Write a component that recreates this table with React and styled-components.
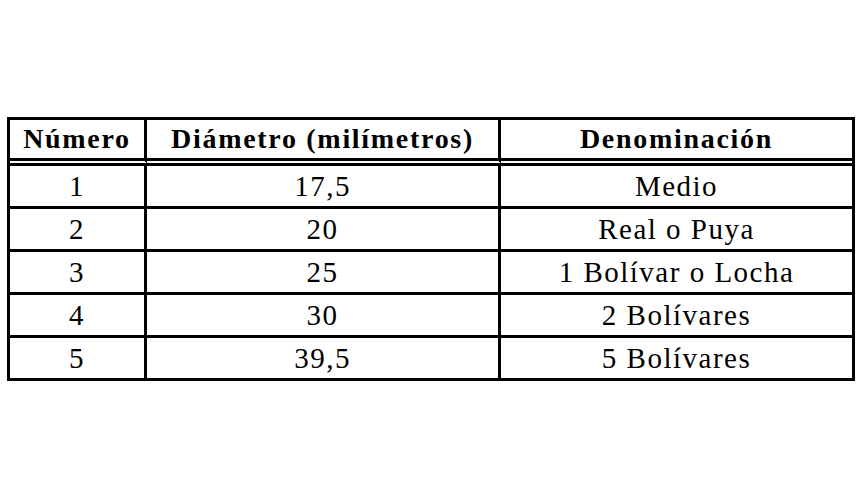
import React from 'react';
import styled, { createGlobalStyle } from 'styled-components';

const GlobalStyle = createGlobalStyle`
  html, body {
    margin: 0;
    padding: 0;
    background: #ffffff;
  }
`;

const Page = styled.div`
  width: 862px;
  height: 500px;
  padding: 117px 0 0 7px;
  box-sizing: border-box;
  background: #ffffff;
`;

const Table = styled.table`
  width: 848px;
  border-collapse: separate;
  border-spacing: 0;
  border: 3px solid #000;
  table-layout: fixed;
  font-family: "Liberation Serif", "Times New Roman", serif;
  color: #000;
`;

const Col = styled.col`
  width: ${props => props.w}px;
`;

const HeadCell = styled.th`
  height: 38px;
  padding: 0;
  font-size: 28px;
  font-weight: bold;
  letter-spacing: 1.7px;
  line-height: 1;
  text-align: center;
  vertical-align: middle;
  border-bottom: 8px double #000;
  border-right: ${props => (props.last ? 'none' : '3px solid #000')};
`;

const Cell = styled.td`
  height: 40px;
  padding: 0;
  font-size: 29px;
  letter-spacing: 1.5px;
  line-height: 1;
  text-align: center;
  vertical-align: middle;
  border-bottom: ${props => (props.lastRow ? 'none' : '3px solid #000')};
  border-right: ${props => (props.last ? 'none' : '3px solid #000')};
`;

const rows = [
  ['1', '17,5', 'Medio'],
  ['2', '20', 'Real o Puya'],
  ['3', '25', '1 Bolívar o Locha'],
  ['4', '30', '2 Bolívares'],
  ['5', '39,5', '5 Bolívares'],
];

export default function App() {
  return (
    <Page>
      <GlobalStyle />
      <Table>
        <colgroup>
          <Col w={137} />
          <Col w={354} />
          <Col w={351} />
        </colgroup>
        <thead>
          <tr>
            <HeadCell>Número</HeadCell>
            <HeadCell>Diámetro (milímetros)</HeadCell>
            <HeadCell last>Denominación</HeadCell>
          </tr>
        </thead>
        <tbody>
          {rows.map((r, i) => (
            <tr key={r[0]}>
              {r.map((v, j) => (
                <Cell key={j} last={j === 2} lastRow={i === rows.length - 1}>
                  {v}
                </Cell>
              ))}
            </tr>
          ))}
        </tbody>
      </Table>
    </Page>
  );
}
